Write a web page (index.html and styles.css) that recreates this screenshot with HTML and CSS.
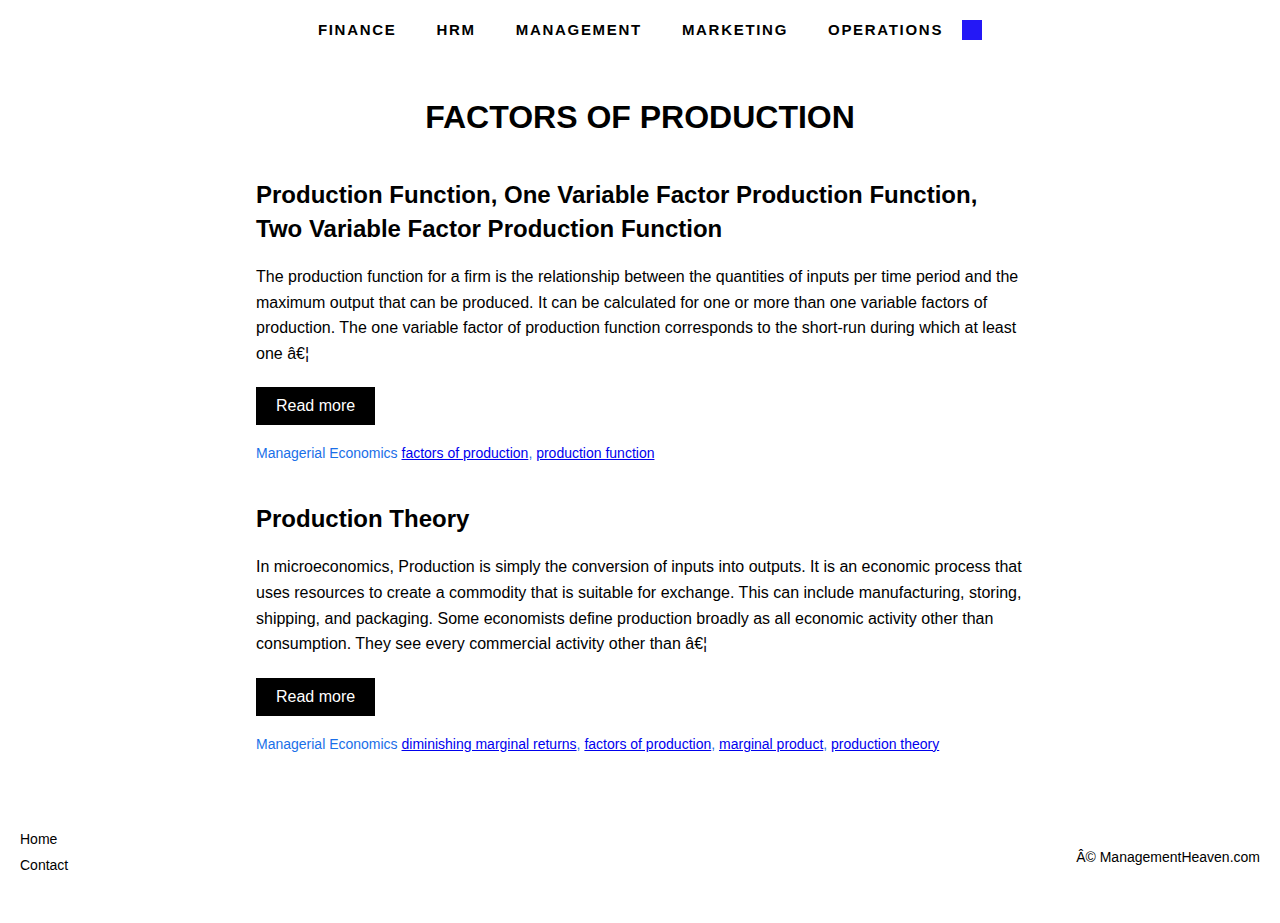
FILE: index.html
```html
<!DOCTYPE html>
<html lang="en">
<head>
<meta charset="utf-8">
<title>Factors of Production</title>
<link rel="stylesheet" href="styles.css">
</head>
<body>
<header class="site-header">
  <nav class="main-nav">
    <a class="nav-link" href="#">FINANCE</a>
    <a class="nav-link" href="#">HRM</a>
    <a class="nav-link" href="#">MANAGEMENT</a>
    <a class="nav-link" href="#">MARKETING</a>
    <a class="nav-link" href="#">OPERATIONS</a>
    <span class="nav-square"></span>
  </nav>
</header>
<main class="content">
  <h1 class="page-title">FACTORS OF PRODUCTION</h1>
  <article class="post">
    <h2 class="post-title">Production Function, One Variable Factor Production Function, Two Variable Factor Production Function</h2>
    <p class="post-excerpt">The production function for a firm is the relationship between the quantities of inputs per time period and the maximum output that can be produced. It can be calculated for one or more than one variable factors of production. The one variable factor of production function corresponds to the short-run during which at least one â€¦</p>
    <a class="read-more" href="#">Read more</a>
    <div class="post-meta"><span class="category">Managerial Economics</span> <a href="#">factors of production</a>, <a href="#">production function</a></div>
  </article>
  <article class="post">
    <h2 class="post-title">Production Theory</h2>
    <p class="post-excerpt">In microeconomics, Production is simply the conversion of inputs into outputs. It is an economic process that uses resources to create a commodity that is suitable for exchange. This can include manufacturing, storing, shipping, and packaging. Some economists define production broadly as all economic activity other than consumption. They see every commercial activity other than â€¦</p>
    <a class="read-more" href="#">Read more</a>
    <div class="post-meta"><span class="category">Managerial Economics</span> <a href="#">diminishing marginal returns</a>, <a href="#">factors of production</a>, <a href="#">marginal product</a>, <a href="#">production theory</a></div>
  </article>
</main>
<footer class="site-footer">
  <ul class="footer-links">
    <li><a href="#">Home</a></li>
    <li><a href="#">Contact</a></li>
  </ul>
  <div class="copyright">Â© ManagementHeaven.com</div>
</footer>
</body>
</html>
```
FILE: styles.css
```css
* { box-sizing: border-box; }
html, body { margin: 0; padding: 0; }
body {
  font-family: "Liberation Sans", Arial, sans-serif;
  color: #000;
  background: #fff;
}
.main-nav {
  height: 58px;
  margin-bottom: 2px;
  display: flex;
  justify-content: center;
  align-items: center;
}
.nav-link {
  padding: 0 20px;
  font-size: 15px;
  font-weight: bold;
  letter-spacing: 1.7px;
  color: #000;
  text-decoration: none;
}
.nav-square {
  width: 20px;
  height: 20px;
  background: #2418f6;
  margin-top: 2px;
  margin-left: -1px;
}
.content {
  width: 768px;
  margin: 0 auto;
}
.page-title {
  margin: 41px 0 0;
  font-size: 32px;
  line-height: 36px;
  text-align: center;
}
.post { margin-top: 43px; }
.post + .post { margin-top: 39px; }
.post-title {
  margin: 0;
  font-size: 24px;
  line-height: 34px;
}
.post-excerpt {
  margin: 18px 0 21px;
  font-size: 16px;
  line-height: 25.6px;
}
.read-more {
  display: inline-block;
  background: #000;
  color: #fff;
  text-decoration: none;
  font-size: 16px;
  line-height: 38px;
  padding: 0 20px;
}
.post-meta {
  margin-top: 18px;
  font-size: 14px;
  line-height: 20px;
  color: #1a6fe8;
}
.post-meta a { color: #0000ee; }
.site-footer {
  margin-top: 72px;
  padding: 0 20px 30px;
  display: flex;
  justify-content: space-between;
  align-items: center;
}
.footer-links {
  list-style: none;
  margin: 0;
  padding: 0;
  font-size: 14px;
  line-height: 26px;
}
.footer-links a { color: #000; text-decoration: none; }
.copyright { font-size: 14px; padding-top: 10px; }
```
